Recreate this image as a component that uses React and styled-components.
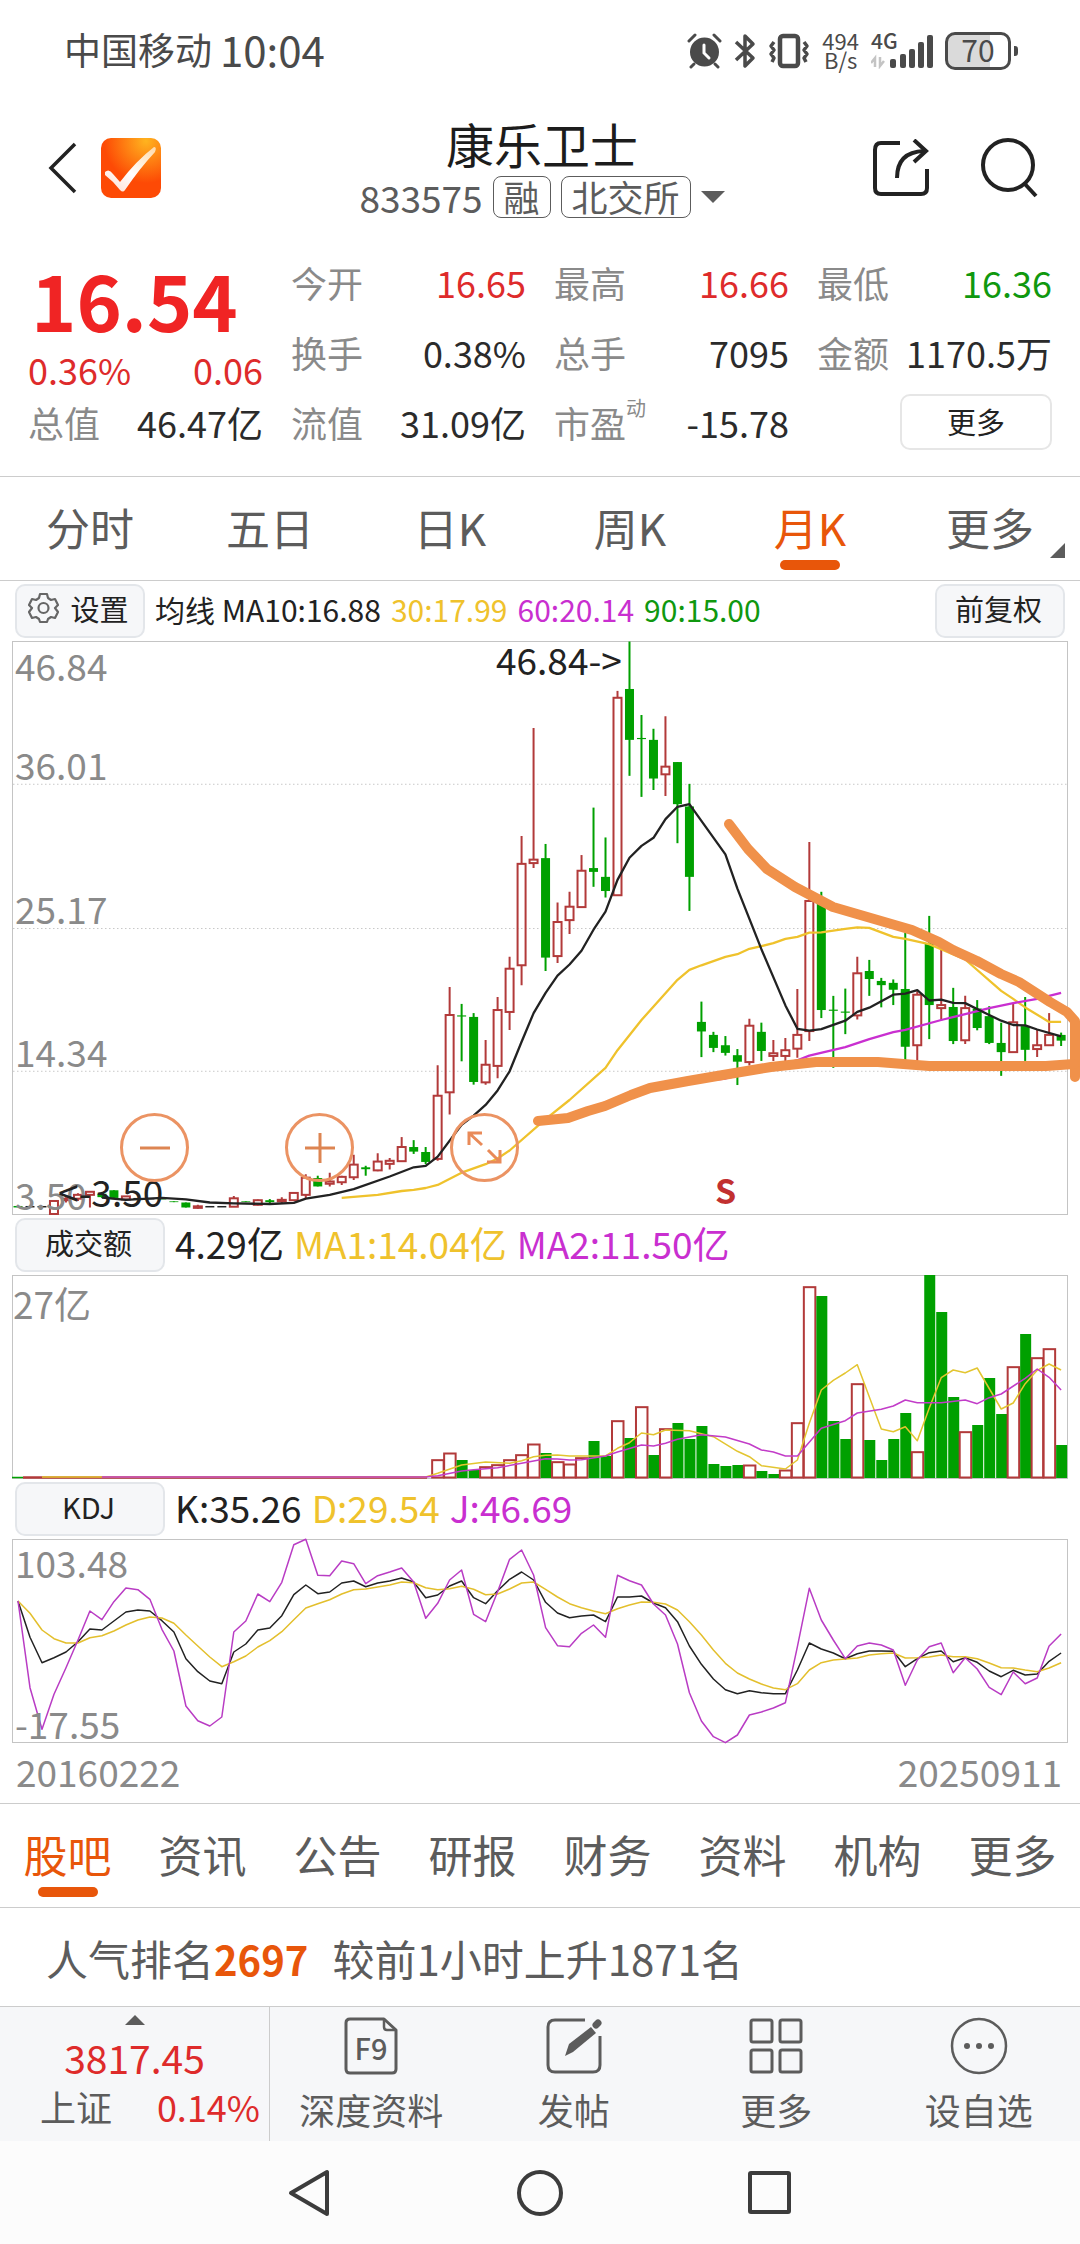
import React from "react";
import styled, { createGlobalStyle } from "styled-components";

const color = {
  ink: "#222222",
  text: "#5c5c5c",
  label: "#8a8a8a",
  red: "#de2b2b",
  up: "#b23a3a",
  green: "#00a000",
  yellow: "#efc22c",
  magenta: "#c92fd0",
  brand: "#e8560a",
  line: "#cccccc",
  panel: "#f6f7f9",
  marker: "#f0914a",
};

const GlobalStyle = createGlobalStyle`
  *, *::before, *::after { box-sizing: border-box; }
  body {
    margin: 0;
    background: #fff;
    color: ${color.ink};
    font-family: "Noto Sans CJK SC", "Noto Sans", sans-serif;
  }
  button {
    font: inherit;
    color: inherit;
    margin: 0;
    padding: 0;
    border: 0;
    background: none;
  }
  svg { display: block; }
  dl, dd, dt, h1, p { margin: 0; font-weight: 400; }
`;

/* ---------- status bar ---------- */

const StatusBar = styled.div`
  display: flex;
  justify-content: space-between;
  align-items: center;
  height: 102px;
  padding: 0 62px 0 64px;
  color: #4a4a4a;
`;

const Carrier = styled.div`
  display: flex;
  align-items: center;
  gap: 8px;
  padding-bottom: 4px;
  font-size: 37px;
  line-height: 48px;
`;

const Clock = styled.span`
  font-size: 42px;
`;

const StatusIcons = styled.div`
  display: flex;
  align-items: center;
  gap: 12px;
`;

const Speed = styled.div`
  display: grid;
  font-size: 22px;
  line-height: 19px;
  text-align: center;
  padding-bottom: 3px;
`;

const Signal = styled.div`
  position: relative;
`;

const Generation = styled.span`
  position: absolute;
  left: 0;
  top: -3px;
  font-size: 21px;
  line-height: 20px;
  font-weight: 500;
`;

const Battery = styled.div`
  display: flex;
  align-items: center;
  gap: 3px;
  &::after {
    content: "";
    width: 4px;
    height: 10px;
    border-radius: 0 3px 3px 0;
    background: #4a4a4a;
  }
`;

const BatteryBody = styled.div`
  width: 66px;
  height: 38px;
  border: 3px solid #4a4a4a;
  border-radius: 10px;
  background: linear-gradient(90deg, #dadada 70%, #fff 70%);
  text-align: center;
  font-size: 30px;
  line-height: 28px;
`;

/* ---------- header ---------- */

const Header = styled.header`
  display: grid;
  grid-template-columns: 1fr auto 1fr;
  align-items: center;
  padding: 12px 42px 29px 46px;
`;

const HeaderSide = styled.div`
  display: flex;
  align-items: center;
  justify-content: ${(p) => (p.$end ? "flex-end" : "flex-start")};
  gap: ${(p) => (p.$end ? "50px" : "22px")};
  padding-top: 4px;
`;

const Title = styled.h1`
  font-size: 48px;
  line-height: 58px;
  padding-bottom: 4px;
  text-align: center;
  color: #1c1c1c;
`;

const CodeRow = styled.div`
  display: flex;
  align-items: center;
  gap: 10px;
  font-size: 37px;
  line-height: 38px;
  color: ${color.text};
`;

const Tag = styled.span`
  border: 1px solid ${color.text};
  border-radius: 8px;
  padding: 0 10px;
  height: 42px;
  font-size: 36px;
`;

/* ---------- quote ---------- */

const Quote = styled.section`
  display: grid;
  grid-template-columns: repeat(4, 1fr);
  grid-auto-rows: 70px;
  column-gap: 28px;
  padding: 0 28px 19px;
  border-bottom: 1px solid ${color.line};
`;

const PriceBlock = styled.div`
  grid-row: span 2;
  display: flex;
  flex-direction: column;
  justify-content: flex-end;
  gap: 6px;
  color: ${color.red};
`;

const Price = styled.strong`
  padding-left: 3px;
  font-size: 77px;
  line-height: 92px;
  font-weight: 700;
  color: #f02424;
`;

const Spread = styled.div`
  display: flex;
  justify-content: space-between;
  font-size: 36px;
  line-height: 36px;
`;

const Stat = styled.dl`
  display: flex;
  justify-content: space-between;
  align-items: center;
  font-size: 36px;
  line-height: 48px;
  white-space: nowrap;
`;

const StatLabel = styled.dt`
  color: ${color.label};
  display: flex;
`;

const Sup = styled.small`
  font-size: 20px;
  line-height: 20px;
`;

const StatValue = styled.dd`
  color: ${(p) => p.$tone || "#2b2b2b"};
`;

const MoreButton = styled.button`
  justify-self: end;
  align-self: center;
  width: 152px;
  height: 56px;
  padding-bottom: 2px;
  border: 2px solid #e6e6e6;
  border-radius: 10px;
  font-size: 29px;
  line-height: 48px;
`;

/* ---------- tabs ---------- */

const Tabs = styled.nav`
  display: grid;
  grid-auto-flow: column;
  grid-auto-columns: 1fr;
  height: 104px;
  border-bottom: 1px solid ${color.line};
`;

const Tab = styled.button`
  position: relative;
  padding-bottom: 4px;
  font-size: 44px;
  line-height: 96px;
  color: ${(p) => (p.$active ? color.brand : color.text)};
  &::after {
    content: "";
    display: ${(p) => (p.$active ? "block" : "none")};
    position: absolute;
    left: calc(50% - 30px);
    bottom: 10px;
    width: 60px;
    height: 10px;
    border-radius: 5px;
    background: ${color.brand};
  }
`;

const Corner = styled.span`
  position: absolute;
  right: 15px;
  bottom: 22px;
  border-left: 15px solid transparent;
  border-bottom: 15px solid ${color.text};
`;

/* ---------- chart panels ---------- */

const LegendRow = styled.div`
  display: flex;
  align-items: center;
  height: 60px;
  padding: 0 15px;
  gap: 10px;
  font-size: ${(p) => (p.$compact ? "30px" : "37px")};
  line-height: 48px;
  white-space: nowrap;
`;

const ChipButton = styled.button`
  display: flex;
  align-items: center;
  justify-content: center;
  gap: 11px;
  width: ${(p) => (p.$wide ? "150px" : "130px")};
  height: 54px;
  padding: 0 3px 6px 0;
  border: 2px solid #e3e6ea;
  border-radius: 10px;
  background: ${color.panel};
  font-size: 29px;
  margin-left: ${(p) => (p.$end ? "auto" : "0")};
`;

const Legend = styled.span`
  padding-bottom: 5px;
  color: ${(p) => p.$tone || color.ink};
`;

const Plot = styled.div`
  position: relative;
  margin: 0 12px;
  height: ${(p) => p.$height}px;
  box-shadow: inset 0 0 0 1px #c4c4c4;
  svg.plot {
    width: 100%;
    height: 100%;
    overflow: visible;
  }
`;

const AxisLabel = styled.span`
  position: absolute;
  left: ${(p) => p.$left || 3}px;
  top: ${(p) => p.$top}px;
  font-size: 37px;
  line-height: 36px;
  color: ${(p) => p.$tone || color.label};
`;

const SellMark = styled(AxisLabel)`
  font-size: 34px;
  font-weight: 700;
`;

const RoundButton = styled.button`
  position: absolute;
  top: 472px;
  left: ${(p) => p.$left}px;
  width: 69px;
  height: 69px;
  border: 3px solid #eb9363;
  border-radius: 50%;
  display: grid;
  place-items: center;
`;

const Dates = styled.div`
  display: flex;
  justify-content: space-between;
  padding: 4px 18px 8px 16px;
  font-size: 37px;
  line-height: 48px;
  color: ${color.label};
  border-bottom: 1px solid ${color.line};
`;

/* ---------- lower part ---------- */

const Rank = styled.p`
  padding: 22px 46px 19px;
  font-size: 42px;
  line-height: 56px;
  color: ${color.text};
  border-bottom: 1px solid ${color.line};
  strong {
    color: ${color.brand};
    font-weight: 700;
    margin-right: 24px;
    font-size: 40px;
  }
`;

const ActionBar = styled.div`
  display: grid;
  grid-template-columns: 4fr 3fr 3fr 3fr 3fr;
  height: 134px;
  background: ${color.panel};
`;

const IndexCell = styled.button`
  display: flex;
  flex-direction: column;
  align-items: center;
  border-right: 1px solid ${color.line};
  padding-top: 8px;
  color: ${color.red};
`;

const Caret = styled.span`
  border: ${(p) => p.$size}px solid transparent;
  border-${(p) => (p.$up ? "bottom" : "top")}-color: ${color.text};
  border-${(p) => (p.$up ? "top" : "bottom")}-width: 0;
`;

const IndexValue = styled.span`
  font-size: 39px;
  line-height: 40px;
  margin-top: 12px;
`;

const IndexRow = styled.span`
  display: flex;
  justify-content: space-between;
  align-self: stretch;
  padding: 0 9px 0 40px;
  margin-top: 7px;
  font-size: 36px;
  line-height: 44px;
  span { color: ${color.text}; }
`;

const Action = styled.button`
  display: flex;
  flex-direction: column;
  align-items: center;
  gap: 10px;
  padding-top: 10px;
  font-size: 36px;
  line-height: 48px;
  color: ${color.text};
`;

const SystemNav = styled.div`
  display: flex;
  justify-content: center;
  align-items: center;
  gap: 182px;
  height: 104px;
  background: #fcfcfc;
  color: #3c3c3c;
`;

const NavKey = styled.button`
  width: 48px;
  height: 48px;
`;

/* ---------- chart data ---------- */

// One candle per month: direction, wick top, body top, body bottom, wick bottom.
const candles = [
  ["g", 1481, 1481, 1481, 1481], ["k", 1481, 1481, 1481, 1481], ["k", 1481, 1481, 1481, 1481],
  ["r", 1464, 1466, 1500, 1500], ["r", 1456, 1460, 1464, 1470], ["r", 1446, 1450, 1460, 1466],
  ["r", 1440, 1442, 1450, 1483], ["g", 1444, 1447, 1456, 1458], ["g", 1438, 1438, 1458, 1458],
  ["r", 1453, 1454, 1462, 1466], ["k", 1460, 1460, 1460, 1460], ["k", 1460, 1460, 1460, 1460],
  ["g", 1460, 1460, 1460, 1460], ["g", 1467, 1467, 1469, 1469], ["g", 1470, 1470, 1483, 1483],
  ["r", 1476, 1480, 1484, 1486], ["k", 1481, 1481, 1481, 1481], ["k", 1481, 1481, 1481, 1481],
  ["r", 1453, 1459, 1481, 1481], ["g", 1467, 1467, 1469, 1469], ["r", 1462, 1464, 1476, 1478],
  ["g", 1461, 1464, 1469, 1472], ["r", 1456, 1463, 1467, 1472], ["r", 1444, 1445, 1464, 1464],
  ["r", 1396, 1405, 1450, 1458], ["g", 1400, 1406, 1428, 1428], ["r", 1392, 1415, 1421, 1428],
  ["r", 1400, 1403, 1417, 1424], ["r", 1345, 1371, 1404, 1411], ["g", 1374, 1378, 1383, 1400],
  ["r", 1341, 1363, 1386, 1388], ["r", 1354, 1361, 1369, 1384], ["r", 1299, 1325, 1362, 1362],
  ["g", 1307, 1325, 1337, 1343], ["g", 1325, 1338, 1364, 1370], ["r", 1111, 1191, 1356, 1361],
  ["r", 907, 980, 1182, 1240], ["g", 951, 981, 984, 1101], ["g", 975, 985, 1155, 1162],
  ["r", 1045, 1110, 1156, 1162], ["r", 933, 967, 1113, 1145], ["r", 828, 859, 972, 1019],
  ["r", 512, 585, 850, 902], ["r", 230, 574, 583, 596], ["g", 533, 570, 830, 865],
  ["r", 686, 737, 826, 844], ["r", 658, 697, 732, 768], ["r", 562, 603, 698, 698],
  ["g", 438, 596, 606, 645], ["g", 516, 619, 656, 673], ["r", 133, 151, 667, 667],
  ["g", 4, 128, 261, 355], ["g", 196, 256, 259, 410], ["g", 232, 261, 362, 392],
  ["r", 199, 331, 351, 408], ["g", 319, 319, 429, 531], ["g", 376, 435, 619, 708],
  ["g", 945, 998, 1023, 1090], ["g", 1024, 1032, 1066, 1077], ["g", 1035, 1059, 1079, 1086],
  ["g", 1069, 1085, 1102, 1163], ["r", 990, 1008, 1103, 1112], ["g", 1000, 1024, 1074, 1100],
  ["r", 1045, 1080, 1087, 1100], ["r", 1040, 1072, 1087, 1100], ["r", 912, 1032, 1068, 1092],
  ["r", 528, 682, 1022, 1048], ["g", 658, 680, 967, 988], ["g", 930, 966, 969, 1118],
  ["g", 911, 971, 974, 1030], ["r", 828, 871, 981, 992], ["g", 836, 865, 886, 930],
  ["g", 883, 891, 902, 960], ["g", 887, 896, 914, 954], ["g", 765, 912, 1063, 1100],
  ["r", 918, 927, 1059, 1100], ["g", 721, 792, 954, 1043], ["r", 810, 954, 962, 995],
  ["g", 909, 959, 1048, 1056], ["r", 930, 962, 1046, 1056], ["g", 941, 963, 1014, 1020],
  ["g", 957, 983, 1053, 1056], ["g", 1000, 1053, 1077, 1139], ["r", 950, 999, 1077, 1077],
  ["g", 933, 1009, 1071, 1100], ["r", 1018, 1059, 1069, 1090], ["r", 975, 1032, 1059, 1059],
  ["g", 1026, 1032, 1047, 1061],
];

// Moving averages as [month index, level].
const ma10 = [[7, 1457], [9, 1463], [12, 1458], [14, 1462], [16, 1470], [18, 1472], [21, 1474], [23, 1471], [24, 1460], [26, 1450], [28, 1435], [31, 1402], [33, 1378], [34, 1374], [35, 1350], [37, 1267], [38, 1243], [39, 1215], [40, 1177], [41, 1127], [42, 1050], [43, 975], [44, 922], [45, 877], [46, 848], [47, 812], [48, 757], [49, 710], [50, 627], [51, 569], [52, 538], [53, 517], [54, 468], [55, 436], [56, 429], [59, 560], [60, 650], [62, 808], [64, 955], [65, 1016], [66, 1021], [67, 1017], [69, 995], [70, 972], [71, 961], [73, 927], [74, 924], [75, 915], [76, 942], [77, 940], [78, 948], [79, 949], [81, 980], [82, 995], [83, 1006], [84, 1007], [85, 1018], [87, 1036]];
const ma30 = [[27, 1458], [30, 1450], [32, 1440], [33, 1437], [34, 1432], [35, 1424], [37, 1392], [39, 1370], [40, 1355], [41, 1334], [44, 1252], [46, 1202], [49, 1118], [50, 1072], [52, 993], [55, 888], [56, 862], [57, 850], [59, 828], [60, 821], [61, 807], [62, 800], [63, 792], [64, 781], [65, 776], [66, 765], [67, 764], [69, 755], [70, 751], [71, 752], [73, 776], [74, 781], [76, 795], [79, 835], [82, 917], [83, 938], [84, 960], [86, 998], [87, 998]];
const ma60 = [[57, 1153], [59, 1146], [62, 1125], [65, 1098], [66, 1086], [69, 1064], [71, 1043], [73, 1025], [74, 1019], [77, 993], [79, 978], [81, 962], [83, 949], [85, 938], [87, 922]];

// Turnover bars, starting at month 35.
const bars = "r749 r729 g750 g780 r770 r764 r749 r734 r702 g729 r755 r762 r743 g693 g738 r632 g684 r590 g735 r656 g639 g687 g648 g762 g768 g765 r765 g783 g792 r780 r638 r230 g258 g633 g687 r521 g690 g750 g687 g609 r725 g195 g306 g561 r665 g645 g504 g612 r470 g372 r443 r416 g705"
  .split(" ")
  .map((s) => [s[0], Number(s.slice(1))]);
const vol1 = [[2, 801], [34, 801], [35, 790], [37, 765], [39, 756], [41, 760], [42, 752], [43, 740], [44, 736], [45, 735], [46, 738], [49, 738], [50, 715], [51, 698], [52, 669], [53, 674], [54, 660], [56, 662], [58, 680], [60, 724], [61, 740], [62, 767], [64, 777], [65, 750], [66, 640], [67, 540], [68, 511], [69, 489], [70, 464], [72, 657], [73, 665], [74, 650], [75, 692], [76, 595], [77, 503], [78, 480], [79, 488], [80, 474], [82, 597], [83, 579], [84, 521], [85, 481], [86, 462], [87, 480]];
const vol2 = [[7, 801], [34, 801], [35, 797], [37, 783], [38, 779], [40, 773], [42, 760], [44, 746], [45, 747], [46, 750], [47, 749], [49, 738], [50, 726], [52, 705], [53, 708], [54, 700], [55, 688], [57, 674], [59, 681], [61, 702], [62, 720], [63, 726], [64, 738], [65, 738], [67, 655], [69, 632], [70, 609], [72, 598], [73, 588], [74, 570], [75, 578], [77, 578], [79, 570], [80, 581], [81, 563], [82, 552], [84, 505], [85, 477], [86, 502], [87, 540]];

const kLine = [363, 472, 548, 533, 516, 485, 447, 450, 423, 396, 390, 393, 422, 456, 536, 575, 603, 611, 516, 492, 450, 444, 407, 344, 315, 341, 336, 309, 303, 320, 309, 303, 294, 306, 353, 345, 318, 303, 353, 371, 332, 298, 276, 300, 367, 399, 413, 408, 405, 425, 351, 351, 348, 369, 383, 425, 498, 553, 597, 629, 641, 632, 638, 641, 641, 570, 489, 507, 519, 536, 521, 513, 513, 514, 560, 536, 518, 513, 545, 533, 547, 573, 590, 571, 585, 582, 544, 519];
const dLine = [363, 400, 450, 476, 489, 489, 473, 467, 453, 435, 420, 411, 414, 430, 465, 498, 531, 560, 545, 528, 501, 482, 455, 419, 384, 371, 359, 342, 329, 327, 321, 315, 306, 308, 323, 329, 326, 319, 328, 344, 342, 327, 309, 306, 328, 351, 371, 383, 393, 401, 386, 375, 366, 367, 372, 390, 425, 465, 510, 550, 579, 597, 612, 624, 629, 611, 570, 548, 540, 537, 534, 525, 521, 519, 534, 533, 531, 525, 530, 530, 536, 549, 563, 564, 570, 575, 564, 548];
const jLine = [363, 623, 748, 643, 563, 480, 393, 419, 365, 324, 329, 358, 448, 513, 678, 722, 738, 711, 456, 423, 342, 365, 307, 194, 178, 286, 287, 243, 251, 311, 287, 276, 264, 306, 415, 370, 300, 270, 403, 425, 335, 238, 210, 285, 443, 497, 500, 460, 435, 472, 286, 302, 315, 372, 405, 492, 638, 723, 770, 788, 765, 705, 696, 684, 668, 500, 325, 420, 480, 536, 498, 489, 495, 510, 616, 540, 500, 489, 578, 533, 567, 622, 644, 576, 611, 594, 498, 462];

const xAt = (i) => 6 + i * 11.99;
const priceY = (v) => v / 2.6133 - 1;
const volumeY = (v) => v / 3 - 65;
const kdjY = (v) => v / 3 - 59;

const Line = ({ data, y, stroke, width = 2 }) => (
  <polyline
    fill="none"
    stroke={stroke}
    strokeWidth={width}
    strokeLinejoin="round"
    points={data
      .map((d, i) => (Array.isArray(d) ? d : [i, d]))
      .map(([i, v]) => `${xAt(i).toFixed(1)},${y(v).toFixed(1)}`)
      .join(" ")}
  />
);

const Candle = ({ i, data: [dir, high, top, bottom, low] }) => {
  const x = xAt(i);
  const t = priceY(top);
  const b = priceY(bottom);
  if (dir === "k" || top === bottom) {
    const stroke = dir === "k" ? color.ink : color.green;
    return <path d={`M${x - 4.5} ${t}h9`} stroke={stroke} strokeWidth="1.5" />;
  }
  if (dir === "g") {
    return (
      <g fill={color.green}>
        <rect x={x - 1} y={priceY(high)} width="2" height={priceY(low) - priceY(high)} />
        <rect x={x - 4.5} y={t} width="9" height={b - t} />
      </g>
    );
  }
  return (
    <g fill="none" stroke={color.up} strokeWidth="2">
      <path d={`M${x} ${priceY(high)}V${t}M${x} ${b}V${priceY(low)}`} />
      <rect x={x - 4} y={t} width="8" height={b - t} />
    </g>
  );
};

const Bar = ({ i, dir, top }) => {
  const x = xAt(i);
  const y = volumeY(top);
  return dir === "g" ? (
    <rect x={x - 5} y={y} width="11" height={203 - y} fill={color.green} />
  ) : (
    <rect x={x - 5.5} y={y + 0.5} width="11.5" height={202 - y} fill="#fff" stroke={color.up} strokeWidth="2" />
  );
};

function PriceChart() {
  return (
    <Plot $height={574}>
      <AxisLabel $top={6}>46.84</AxisLabel>
      <AxisLabel $top={105}>36.01</AxisLabel>
      <AxisLabel $top={249}>25.17</AxisLabel>
      <AxisLabel $top={392}>14.34</AxisLabel>
      <AxisLabel $top={535}>3.50</AxisLabel>
      <svg className="plot" viewBox="0 0 1056 574" preserveAspectRatio="none">
        {[377, 754, 1127].map((v) => (
          <path key={v} d={`M1 ${priceY(v)}H1055`} stroke="#c8c8c8" strokeWidth="1" strokeDasharray="1.5 2.5" />
        ))}
        {candles.map((c, i) => (
          <Candle key={i} i={i} data={c} />
        ))}
        <Line data={ma30} y={priceY} stroke={color.yellow} width={2.3} />
        <Line data={ma60} y={priceY} stroke={color.magenta} width={2.3} />
        <Line data={ma10} y={priceY} stroke={color.ink} width={2.3} />
        <g fill="none" stroke={color.marker} strokeWidth="10" strokeLinecap="round" strokeLinejoin="round">
          <polyline points="717,183 736,208 755,228 783,246 821,266 845,273 900,289 927,301 941,309 965,320 989,333 1007,341 1038,361 1055,371 1063,380 1063,436" />
          <polyline points="526,480 556,477 576,470 593,465 619,454 638,447 676,440 711,434 759,426 804,421 866,421 917,425 1034,425 1062,423" />
        </g>
      </svg>
      <AxisLabel $left={484} $top={0} $tone={color.ink}>46.84-&gt;</AxisLabel>
      <AxisLabel $left={46} $top={532} $tone={color.ink}>&lt;-3.50</AxisLabel>
      <SellMark $left={703} $top={531} $tone="#c23030">S</SellMark>
      <RoundButton $left={108} aria-label="缩小">
        <svg width="32" height="32" stroke="#dd8552" strokeWidth="3"><path d="M1 16h30" /></svg>
      </RoundButton>
      <RoundButton $left={273} aria-label="放大">
        <svg width="32" height="32" stroke="#dd8552" strokeWidth="3"><path d="M1 16h30M16 1v30" /></svg>
      </RoundButton>
      <RoundButton $left={438} aria-label="全屏">
        <svg width="36" height="36" fill="none" stroke="#e98a58" strokeWidth="3">
          <path d="M2 15V3h13M2 3l13 12M21 20l12 12M33 20v12H20" />
        </svg>
      </RoundButton>
    </Plot>
  );
}

function VolumeChart() {
  return (
    <Plot $height={204}>
      <AxisLabel $left={1} $top={10}>27亿</AxisLabel>
      <svg className="plot" viewBox="0 0 1056 204" preserveAspectRatio="none">
        <path d="M0 202.5h11" stroke={color.green} strokeWidth="1.5" />
        <path d="M11 202.5H415" stroke={color.up} strokeWidth="2.5" />
        {bars.map(([dir, top], i) => (
          <Bar key={i} i={i + 35} dir={dir} top={top} />
        ))}
        <Line data={vol1} y={volumeY} stroke="#e3c530" width={1.5} />
        <Line data={vol2} y={volumeY} stroke="#c23cc8" width={1.5} />
      </svg>
    </Plot>
  );
}

function KdjChart() {
  return (
    <Plot $height={204}>
      <svg className="plot" viewBox="0 0 1056 204" preserveAspectRatio="none">
        <Line data={kLine} y={kdjY} stroke={color.ink} width={1.5} />
        <Line data={dLine} y={kdjY} stroke="#e3bf2c" width={1.5} />
        <Line data={jLine} y={kdjY} stroke="#b93cc4" width={1.5} />
      </svg>
      <AxisLabel $top={5}>103.48</AxisLabel>
      <AxisLabel $top={166}>-17.55</AxisLabel>
    </Plot>
  );
}

/* ---------- icons ---------- */

const AlarmIcon = () => (
  <svg width="35" height="36" viewBox="0 0 35 36" fill="none" stroke="#4a4a4a" strokeWidth="3" strokeLinecap="round">
    <circle cx="17.5" cy="19" r="14.5" fill="#4a4a4a" stroke="none" />
    <path d="M2 8l6-6M33 8l-6-6M7 31l-3 3M28 31l3 3" />
    <path d="M17 12v8l5 5" stroke="#fff" />
  </svg>
);

const BluetoothIcon = () => (
  <svg width="22" height="36" viewBox="0 0 22 36" fill="none" stroke="#4a4a4a" strokeWidth="3.5" strokeLinejoin="round">
    <path d="M2 9l17 16-8 8V3l8 8L2 27" />
  </svg>
);

const VibrateIcon = () => (
  <svg width="42" height="36" viewBox="0 0 42 36" fill="none" stroke="#4a4a4a" strokeLinejoin="round">
    <rect x="12" y="3" width="18" height="30" rx="3" strokeWidth="4.500" />
    <path d="M6 9l-3 4 3 4-3 4 3 4-2 4M36 9l3 4-3 4 3 4-3 4 2 4" strokeWidth="3.500" />
  </svg>
);

const SignalIcon = () => (
  <svg width="62" height="36" viewBox="0 0 62 36">
    <path d="M4 34v-9l-4 5M9 24v9l4-5" fill="none" stroke="#c4c4c4" strokeWidth="2.500" />
    {[[19, 9], [29, 14], [38, 19], [47, 26], [56, 33]].map(([x, h]) => (
      <rect key={x} x={x} y={35 - h} width="6" height={h} rx="2" fill="#4a4a4a" />
    ))}
  </svg>
);

const BackIcon = () => (
  <svg width="32" height="54" viewBox="0 0 32 54" fill="none" stroke="#222" strokeWidth="3.5">
    <path d="M29 3L5 27l24 24" />
  </svg>
);

const LogoIcon = () => (
  <svg width="62" height="62" viewBox="0 0 62 62">
    <defs>
      <radialGradient id="logoFill" cx="0.75" cy="0.05" r="0.7">
        <stop offset="0" stopColor="#ffb41f" />
        <stop offset="1" stopColor="#fd4a05" />
      </radialGradient>
      <linearGradient id="logoTick" x1="1" y1="0" x2="0.2" y2="1">
        <stop offset="0" stopColor="#ffd9a8" />
        <stop offset="0.6" stopColor="#fff" />
        <stop offset="1" stopColor="#ffe3d8" />
      </linearGradient>
    </defs>
    <rect x="1" y="1" width="60" height="60" rx="10" fill="url(#logoFill)" />
    <path d="M5 35q4-4 8 2l7 8Q36 24 54 10q3 0 1 5-15 16-30 38-2 3-5 0Q13 44 5 38z" fill="url(#logoTick)" />
  </svg>
);

const ShareIcon = () => (
  <svg width="58" height="58" viewBox="0 0 58 58" fill="none" stroke="#222" strokeWidth="4">
    <path d="M28 4H9Q3 4 3 11v38q0 6 6 6h40q6 0 6-6V30" />
    <path d="M25 39Q25 13 52 12" />
    <path d="M42 1l12 11-12 11" />
  </svg>
);

const SearchIcon = () => (
  <svg width="58" height="62" viewBox="0 0 58 62" fill="none" stroke="#222" strokeWidth="4">
    <circle cx="28" cy="28" r="25" />
    <path d="M44 46l12 13" />
  </svg>
);

const GearIcon = () => (
  <svg width="31" height="32" viewBox="0 0 31 32" fill="none" stroke="#666" strokeWidth="2.2" strokeLinejoin="round">
    <path d="M12 2h7l1 4 3 2 4-1 3 6-3 3 3 4-3 6-4-1-3 2-1 3h-7l-1-3-3-2-4 1-3-6 3-4-3-3 3-6 4 1 3-2z" />
    <circle cx="15.500" cy="16" r="5" />
  </svg>
);

const DocIcon = () => (
  <svg width="54" height="58" viewBox="0 0 54 58" fill="none" stroke={color.text} strokeWidth="3" strokeLinejoin="round">
    <path d="M6 2h34l12 11v39q0 4-4 4H6q-4 0-4-4V6q0-4 4-4z" />
    <path d="M40 2v8q0 3 3 3h9" strokeWidth="2.500" />
    <text x="27" y="43" textAnchor="middle" fontSize="29" fontWeight="500" fill={color.text} stroke="none">F9</text>
  </svg>
);

const EditIcon = () => (
  <svg width="56" height="58" viewBox="0 0 56 58" fill="none" stroke={color.text} strokeWidth="3">
    <path d="M39 3H9Q2 3 2 10v38q0 7 7 7h38q7 0 7-7V19" />
    <path d="M19 39l4-12 22-17 5 6-23 19z" fill={color.text} stroke="none" />
    <path d="M50 8l2-2" strokeWidth="7" strokeLinecap="round" />
  </svg>
);

const GridIcon = () => (
  <svg width="54" height="58" viewBox="0 0 54 58" fill="none" stroke={color.text} strokeWidth="3">
    {[[2, 3], [31, 3], [2, 33], [31, 33]].map(([x, y]) => (
      <rect key={`${x}-${y}`} x={x} y={y} width="21" height="22" rx="2" />
    ))}
  </svg>
);

const DotsIcon = () => (
  <svg width="58" height="58" viewBox="0 0 58 58" fill={color.text}>
    <circle cx="29" cy="29" r="27" fill="none" stroke={color.text} strokeWidth="2.500" />
    <circle cx="17" cy="29" r="3" />
    <circle cx="29" cy="29" r="3" />
    <circle cx="41" cy="29" r="3" />
  </svg>
);

/* ---------- page ---------- */

const stats = [
  [
    { label: "今开", value: "16.65", tone: color.red },
    { label: "最高", value: "16.66", tone: color.red },
    { label: "最低", value: "16.36", tone: "#10980f" },
  ],
  [
    { label: "换手", value: "0.38%" },
    { label: "总手", value: "7095" },
    { label: "金额", value: "1170.5万" },
  ],
  [
    { label: "总值", value: "46.47亿" },
    { label: "流值", value: "31.09亿" },
    { label: "市盈", sup: "动", value: "-15.78" },
  ],
];

const periods = ["分时", "五日", "日K", "周K", "月K", "更多"];
const sections = ["股吧", "资讯", "公告", "研报", "财务", "资料", "机构", "更多"];
const actions = [
  ["深度资料", DocIcon],
  ["发帖", EditIcon],
  ["更多", GridIcon],
  ["设自选", DotsIcon],
];

export default function App() {
  return (
    <>
      <GlobalStyle />
      <StatusBar>
        <Carrier>
          中国移动<Clock>10:04</Clock>
        </Carrier>
        <StatusIcons>
          <AlarmIcon />
          <BluetoothIcon />
          <VibrateIcon />
          <Speed>
            <span>494</span>
            <span>B/s</span>
          </Speed>
          <Signal>
            <Generation>4G</Generation>
            <SignalIcon />
          </Signal>
          <Battery>
            <BatteryBody>70</BatteryBody>
          </Battery>
        </StatusIcons>
      </StatusBar>

      <Header>
        <HeaderSide>
          <button aria-label="返回"><BackIcon /></button>
          <LogoIcon />
        </HeaderSide>
        <div>
          <Title>康乐卫士</Title>
          <CodeRow>
            833575
            <Tag>融</Tag>
            <Tag>北交所</Tag>
            <Caret $size={12} />
          </CodeRow>
        </div>
        <HeaderSide $end>
          <button aria-label="分享"><ShareIcon /></button>
          <button aria-label="搜索"><SearchIcon /></button>
        </HeaderSide>
      </Header>

      <Quote>
        <PriceBlock>
          <Price>16.54</Price>
          <Spread>
            <span>0.36%</span>
            <span>0.06</span>
          </Spread>
        </PriceBlock>
        {stats.flat().map((s) => (
          <Stat key={s.label}>
            <StatLabel>
              {s.label}
              {s.sup && <Sup>{s.sup}</Sup>}
            </StatLabel>
            <StatValue $tone={s.tone}>{s.value}</StatValue>
          </Stat>
        ))}
        <MoreButton>更多</MoreButton>
      </Quote>

      <Tabs>
        {periods.map((name) => (
          <Tab key={name} $active={name === "月K"}>
            {name}
            {name === "更多" && <Corner />}
          </Tab>
        ))}
      </Tabs>

      <LegendRow $compact>
        <ChipButton>
          <GearIcon />
          设置
        </ChipButton>
        <Legend>均线 MA10:16.88</Legend>
        <Legend $tone={color.yellow}>30:17.99</Legend>
        <Legend $tone={color.magenta}>60:20.14</Legend>
        <Legend $tone="#10980f">90:15.00</Legend>
        <ChipButton $end>前复权</ChipButton>
      </LegendRow>
      <PriceChart />

      <LegendRow>
        <ChipButton $wide>成交额</ChipButton>
        <Legend>4.29亿</Legend>
        <Legend $tone={color.yellow}>MA1:14.04亿</Legend>
        <Legend $tone={color.magenta}>MA2:11.50亿</Legend>
      </LegendRow>
      <VolumeChart />

      <LegendRow>
        <ChipButton $wide>KDJ</ChipButton>
        <Legend>K:35.26</Legend>
        <Legend $tone={color.yellow}>D:29.54</Legend>
        <Legend $tone={color.magenta}>J:46.69</Legend>
      </LegendRow>
      <KdjChart />
      <Dates>
        <span>20160222</span>
        <span>20250911</span>
      </Dates>

      <Tabs>
        {sections.map((name) => (
          <Tab key={name} $active={name === "股吧"}>{name}</Tab>
        ))}
      </Tabs>
      <Rank>
        人气排名<strong>2697</strong>较前1小时上升1871名
      </Rank>

      <ActionBar>
        <IndexCell>
          <Caret $size={10} $up />
          <IndexValue>3817.45</IndexValue>
          <IndexRow>
            <span>上证</span>0.14%
          </IndexRow>
        </IndexCell>
        {actions.map(([name, Icon]) => (
          <Action key={name}>
            <Icon />
            {name}
          </Action>
        ))}
      </ActionBar>

      <SystemNav>
        <NavKey aria-label="后退">
          <svg width="48" height="48" fill="none" stroke="currentColor" strokeWidth="4" strokeLinejoin="round">
            <path d="M41 3v42L5 24z" />
          </svg>
        </NavKey>
        <NavKey aria-label="主屏幕">
          <svg width="48" height="48" fill="none" stroke="currentColor" strokeWidth="4">
            <circle cx="24" cy="24" r="21" />
          </svg>
        </NavKey>
        <NavKey aria-label="最近任务">
          <svg width="48" height="48" fill="none" stroke="currentColor" strokeWidth="4" strokeLinejoin="round">
            <rect x="4" y="4" width="39" height="39" rx="1" />
          </svg>
        </NavKey>
      </SystemNav>
    </>
  );
}
